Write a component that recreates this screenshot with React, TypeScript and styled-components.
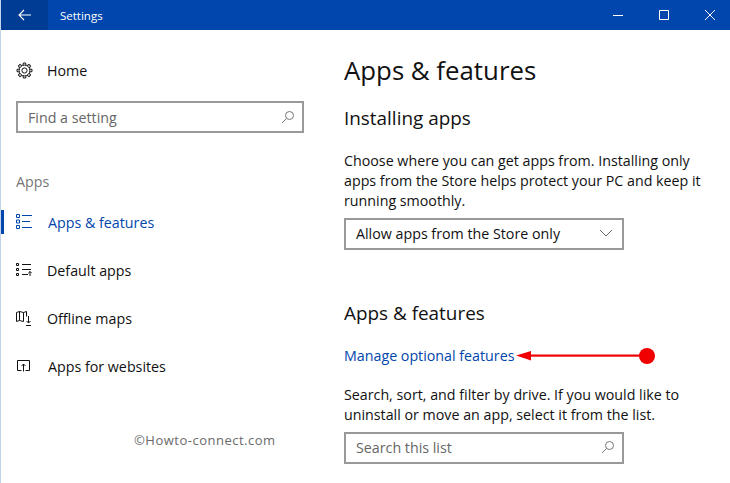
import React from 'react'
import styled, { createGlobalStyle } from 'styled-components'

const GlobalStyle = createGlobalStyle`
  html, body {
    margin: 0;
    padding: 0;
    background: #ffffff;
  }
  body {
    font-family: "Open Sans", "Noto Sans", "Liberation Sans", sans-serif;
    color: #000000;
  }
`

const Window = styled.div`
  width: 730px;
  height: 483px;
  box-sizing: border-box;
  border-left: 1px solid #c4d4ea;
  overflow: hidden;
  display: flex;
  flex-direction: column;
`

const TitleBar = styled.div`
  height: 30px;
  flex-shrink: 0;
  background: #0046ac;
  display: flex;
  align-items: center;
  color: #ffffff;
`

const BackButton = styled.div`
  width: 47px;
  height: 30px;
  background: #003c94;
  display: flex;
  align-items: center;
  justify-content: center;
`

const WindowTitle = styled.span`
  margin-left: 12px;
  font-size: 11.5px;
  flex: 1;
`

const WindowButton = styled.div`
  width: 46px;
  height: 30px;
  flex-shrink: 0;
  display: flex;
  align-items: center;
  justify-content: center;
  &:last-child {
    margin-right: -3px;
  }
`

const Body = styled.div`
  flex: 1;
  display: flex;
  min-height: 0;
`

const Sidebar = styled.nav`
  width: 343px;
  flex-shrink: 0;
  box-sizing: border-box;
  padding-top: 29px;
  display: flex;
  flex-direction: column;
`

const NavRow = styled.div<{ $active?: boolean; $gap?: number }>`
  height: 24px;
  margin-bottom: 24px;
  padding-left: 15px;
  display: flex;
  align-items: center;
  gap: ${({ $gap }) => $gap ?? 15}px;
  font-size: 14.25px;
  color: ${({ $active }) => ($active ? '#0046ac' : '#111111')};
  box-shadow: ${({ $active }) => ($active ? 'inset 3px 0 0 #0046ac' : 'none')};
`

const HomeRow = styled(NavRow)`
  margin-top: -1px;
  margin-bottom: 19px;
`

const SearchBox = styled.div<{ $width: number }>`
  width: ${({ $width }) => $width}px;
  height: 32px;
  box-sizing: border-box;
  border: 2px solid #999999;
  display: flex;
  align-items: center;
  justify-content: space-between;
  padding: 0 7px 0 10px;
  font-size: 14.25px;
  color: #666666;
`

const SidebarSearch = styled(SearchBox)`
  margin-left: 15px;
`

const GroupLabel = styled.div`
  margin: 39px 0 18px 15px;
  font-size: 14.25px;
  line-height: 20px;
  color: #767676;
`

const Watermark = styled.div`
  margin: 29px 0 0 133px;
  font-size: 13px;
  letter-spacing: 0.5px;
  color: #6a6a6a;
`

const Content = styled.main`
  flex: 1;
  display: flex;
  flex-direction: column;
  align-items: flex-start;
  padding-top: 21px;
`

const PageTitle = styled.h1`
  margin: 0;
  font-size: 25.8px;
  line-height: 38px;
  font-weight: 400;
  color: #111111;
`

const SectionTitle = styled.h2<{ $top: number }>`
  margin: ${({ $top }) => $top}px 0 0;
  font-size: 18.9px;
  line-height: 26px;
  font-weight: 400;
  color: #111111;
`

const Paragraph = styled.p<{ $top: number }>`
  margin: ${({ $top }) => $top}px 0 0;
  font-size: 14.25px;
  line-height: 20px;
  color: #111111;
  width: 372px;
`

const Select = styled.div`
  width: 280px;
  height: 32px;
  margin-top: 7px;
  box-sizing: border-box;
  border: 2px solid #999999;
  display: flex;
  align-items: center;
  justify-content: space-between;
  padding: 0 9px 2px 10px;
  font-size: 14.25px;
  color: #111111;
`

const LinkRow = styled.div`
  margin-top: 17px;
  height: 24px;
  display: flex;
  align-items: center;
  gap: 2px;
`

const LinkText = styled.a`
  font-size: 14.25px;
  color: #0046ac;
`

const MainSearch = styled(SearchBox)`
  margin-top: 7px;
  padding-bottom: 2px;
`

const Icon = styled.svg`
  display: block;
  flex-shrink: 0;
  fill: none;
  stroke: currentColor;
`

const MagnifierIcon = () => (
  <Icon width="14" height="14" viewBox="0 0 14 14" strokeWidth="1" style={{ color: '#777777' }}>
    <circle cx="8.5" cy="5.5" r="4" />
    <path d="M5.500 8.500 1 13" />
  </Icon>
)

const GearIcon = () => {
  const teeth = [0, 45, 90, 135, 180, 225, 270, 315]
  return (
    <Icon width="17" height="17" viewBox="0 0 17 17" strokeWidth="1">
      <circle cx="8.5" cy="8.5" r="2.6" />
      <circle cx="8.5" cy="8.5" r="5.4" />
      {teeth.map((a) => (
        <path key={a} d="M7 3.200 7.400 1h2.200L10 3.200" transform={`rotate(${a} 8.5 8.5)`} />
      ))}
    </Icon>
  )
}

const FeaturesIcon = () => (
  <Icon width="16" height="16" viewBox="0 0 16 16" strokeWidth="1">
    <path d="M.5.500h3v3h-3zM.5 6h3v3h-3zM.5 11.500h3v3h-3z" />
    <path d="M6 1.500h10M6 7.500h8M6 13.500h10" />
  </Icon>
)

const DefaultAppsIcon = () => (
  <Icon width="16" height="16" viewBox="0 0 16 16" strokeWidth="1">
    <path d="M.5 1.500h2v2h-2zM.5 6.500h2v2h-2zM.5 11.500h2v2h-2z" />
    <path d="M6 2.500h9M6 7.500h9M6 12.500h6M14 14v-4.500M12.300 11.200l1.700-1.700 1.700 1.700" />
  </Icon>
)

const MapsIcon = () => (
  <Icon width="16" height="16" viewBox="0 0 16 16" strokeWidth="1">
    <path d="M.5 2.500v9l3-1 4 1V8M.5 2.500l3-1 4 1 3-1v5M3.500 1.500v9M7.500 2.500V8" />
    <path d="M12.500 6v7M10.500 11l2 2 2-2M10 15.500h5" />
  </Icon>
)

const WebsitesIcon = () => (
  <Icon width="16" height="16" viewBox="0 0 16 16" strokeWidth="1">
    <path d="M5.500 12.500h-4v-10h12v10h-4" />
    <path d="M7.500 13.500v-7.500M5.500 8l2-2 2 2" />
  </Icon>
)

const RedArrow = () => (
  <svg width="142" height="20" viewBox="0 0 142 20" style={{ display: 'block', flexShrink: 0 }}>
    <path d="M0 10.500 15 6v9.500z" fill="#f00000" />
    <rect x="12" y="9.500" width="114" height="2.200" fill="#f00000" />
    <circle cx="131" cy="11" r="8" fill="#f00000" />
  </svg>
)

export default function App() {
  return (
    <Window>
      <GlobalStyle />
      <TitleBar>
        <BackButton>
          <Icon width="14" height="12" viewBox="0 0 14 12" strokeWidth="1.100">
            <path d="M13 6H1M6 1 1 6l5 5" />
          </Icon>
        </BackButton>
        <WindowTitle>Settings</WindowTitle>
        <WindowButton>
          <Icon width="10" height="10" viewBox="0 0 10 10" strokeWidth="1">
            <path d="M0 5.500h10" />
          </Icon>
        </WindowButton>
        <WindowButton>
          <Icon width="10" height="10" viewBox="0 0 10 10" strokeWidth="1">
            <path d="M.5.500h9v9h-9z" />
          </Icon>
        </WindowButton>
        <WindowButton>
          <Icon width="10" height="10" viewBox="0 0 10 10" strokeWidth="1">
            <path d="M0 0l10 10M10 0 0 10" />
          </Icon>
        </WindowButton>
      </TitleBar>
      <Body>
        <Sidebar>
          <HomeRow $gap={14}>
            <GearIcon />
            Home
          </HomeRow>
          <SidebarSearch $width={288}>
            Find a setting
            <MagnifierIcon />
          </SidebarSearch>
          <GroupLabel>Apps</GroupLabel>
          <NavRow $active $gap={16}>
            <FeaturesIcon />
            Apps &amp; features
          </NavRow>
          <NavRow>
            <DefaultAppsIcon />
            Default apps
          </NavRow>
          <NavRow>
            <MapsIcon />
            Offline maps
          </NavRow>
          <NavRow $gap={16}>
            <WebsitesIcon />
            Apps for websites
          </NavRow>
          <Watermark>©Howto-connect.com</Watermark>
        </Sidebar>
        <Content>
          <PageTitle>Apps &amp; features</PageTitle>
          <SectionTitle $top={16}>Installing apps</SectionTitle>
          <Paragraph $top={20}>
            Choose where you can get apps from. Installing only apps from the Store helps protect your PC and keep it
            running smoothly.
          </Paragraph>
          <Select>
            Allow apps from the Store only
            <Icon width="14" height="8" viewBox="0 0 14 8" strokeWidth="1" style={{ color: '#666666' }}>
              <path d="M1 1l6 6 6-6" />
            </Icon>
          </Select>
          <SectionTitle $top={50}>Apps &amp; features</SectionTitle>
          <LinkRow>
            <LinkText>Manage optional features</LinkText>
            <RedArrow />
          </LinkRow>
          <Paragraph $top={18}>
            Search, sort, and filter by drive. If you would like to uninstall or move an app, select it from the list.
          </Paragraph>
          <MainSearch $width={280}>
            Search this list
            <MagnifierIcon />
          </MainSearch>
        </Content>
      </Body>
    </Window>
  )
}
